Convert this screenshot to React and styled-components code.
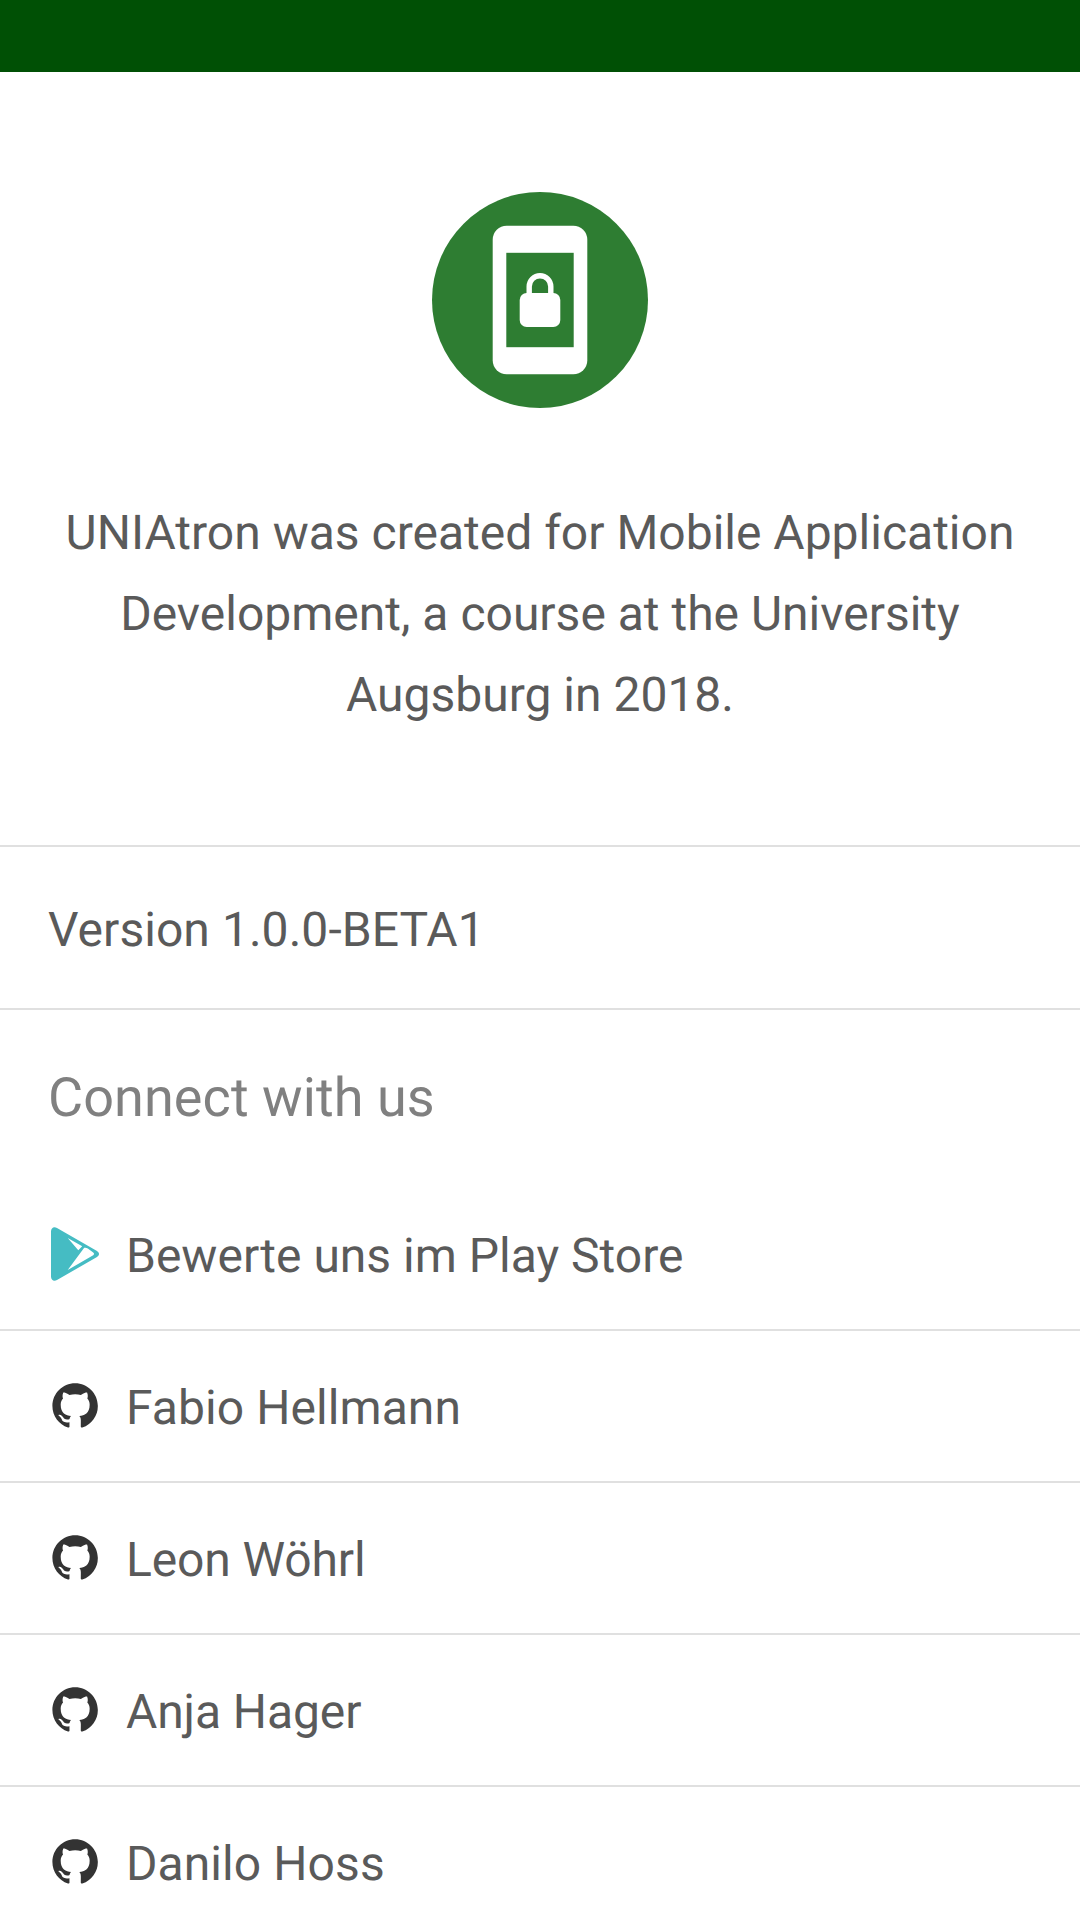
import React from "react";
import styled, { createGlobalStyle } from "styled-components";

const Global = createGlobalStyle`
  body { margin: 0; background: #fff; font-family: Roboto, sans-serif; overflow: hidden; text-rendering: geometricPrecision; }
`;
const Screen = styled.main`
  width: 1080px; height: 1920px; overflow: hidden; background: #fff; color: #5a5a5a;
`;
const StatusBar = styled.div`height: 72px; background: #005005;`;
const Hero = styled.section`
  display: flex; flex-direction: column; align-items: center;
  box-sizing: border-box; height: 773px; padding-top: 120px;
`;
const Logo = styled.svg`width: 216px; height: 216px; flex: none;`;
const Description = styled.p`
  margin: 84px 0 0; width: 984px; font-size: 48px; line-height: 81px; text-align: center;
`;
const Divider = styled.div`height: 2px; background: #e0e0e0;`;
const Version = styled.div`
  box-sizing: border-box; height: 161px; padding: 4px 0 0 48px;
  display: flex; align-items: center; font-size: 48px; letter-spacing: 0.05px;
`;
const Heading = styled.h2`
  box-sizing: border-box; margin: 0; height: 169px; padding: 7px 0 0 48px;
  display: flex; align-items: center; font-size: 54px; font-weight: 400;
  letter-spacing: 0.07px; color: #808080;
`;
const Row = styled.div`
  height: 150px; padding-left: 48px; display: flex; align-items: center; gap: 24px;
  font-size: 48px; border-bottom: 2px solid #e0e0e0;
`;
const Label = styled.span`
  padding-top: 2px;
  letter-spacing: ${({ $tracking = 0 }) => $tracking}px;
`;
const Icon = styled.svg`width: 54px; height: 54px; flex: none;`;

const AppLogo = () => (
  <Logo viewBox="0 0 216 216">
    <circle cx="108" cy="108" r="108" fill="#2e7d32" />
    <rect x="60.7" y="33.7" width="94.6" height="148.600" rx="14" fill="#fff" />
    <rect x="74.3" y="60.8" width="67.4" height="94.4" fill="#2e7d32" />
    <rect x="87.7" y="101" width="40.6" height="34" rx="7" fill="#fff" />
    <path d="M97.200 103V94.500a10.800 10.800 0 0 1 21.600 0V103" fill="none" stroke="#fff" strokeWidth="5.4" />
  </Logo>
);

const PlayStore = () => (
  <Icon viewBox="0 0 54 54">
    <path
      fill="#45bcc3"
      fillRule="evenodd"
      d="M3 4.500C3 1 5.800-.8 9 1L49 24Q53.200 27 49 30L9 53C5.800 54.800 3 53 3 49.500ZM19.700 11L30.300 23.200 34.200 19.300ZM36.200 20.800Q38 20.300 39.800 21.400L45.200 25.400Q46.900 26.900 45.200 28.200L19.700 43Z"
    />
  </Icon>
);

const GitHub = () => (
  <Icon viewBox="0 0 54 54">
    <path
      transform="translate(4.400 4.200) scale(2.840)"
      fill="#333"
      d="M8 0C3.58 0 0 3.58 0 8c0 3.54 2.29 6.53 5.47 7.59.4.07.55-.17.55-.38 0-.19-.01-.82-.01-1.49-2.01.37-2.53-.49-2.69-.94-.09-.23-.48-.94-.82-1.13-.28-.15-.68-.52-.01-.53.63-.01 1.08.58 1.23.82.72 1.21 1.87.87 2.33.66.07-.52.28-.87.51-1.07-1.78-.2-3.64-.89-3.64-3.95 0-.87.31-1.59.82-2.15-.08-.2-.36-1.02.08-2.12 0 0 .67-.21 2.2.82.64-.18 1.32-.27 2-.27s1.36.09 2 .27c1.53-1.04 2.2-.82 2.2-.82.44 1.1.16 1.92.08 2.12.51.56.82 1.27.82 2.15 0 3.07-1.87 3.75-3.65 3.95.29.25.54.73.54 1.48 0 1.07-.01 1.93-.01 2.2 0 .21.15.46.55.38A8.01 8.01 0 0 0 16 8c0-4.42-3.58-8-8-8Z"
    />
  </Icon>
);

const people = [
  { name: "Fabio Hellmann", tracking: 0.07 },
  { name: "Leon Wöhrl", tracking: -0.12 },
  { name: "Anja Hager", tracking: -0.1 },
  { name: "Danilo Hoss", tracking: 0.08 },
];

export default function App() {
  return (
    <Screen>
      <Global />
      <StatusBar />
      <Hero>
        <AppLogo />
        <Description>
          UNIAtron was created for Mobile Application Development, a course at the University Augsburg in 2018.
        </Description>
      </Hero>
      <Divider />
      <Version>Version 1.0.0-BETA1</Version>
      <Divider />
      <Heading>Connect with us</Heading>
      <Row><PlayStore /><Label>Bewerte uns im Play Store</Label></Row>
      {people.map(({ name, tracking }) => (
        <Row key={name}><GitHub /><Label $tracking={tracking}>{name}</Label></Row>
      ))}
    </Screen>
  );
}
